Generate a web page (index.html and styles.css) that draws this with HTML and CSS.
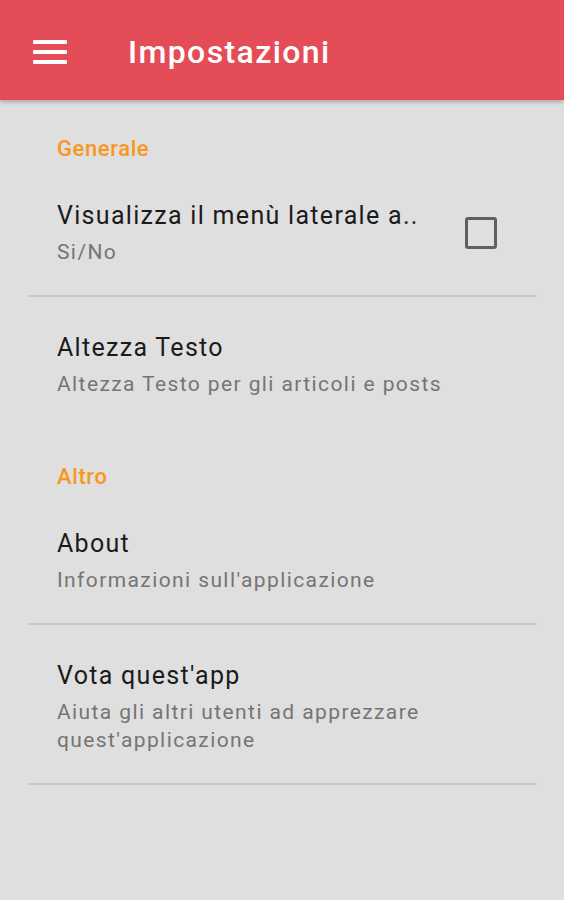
FILE: index.html
```html
<!DOCTYPE html>
<html lang="it">
<head>
    <meta charset="UTF-8">
    <meta name="viewport" content="width=device-width, initial-scale=1.0">
    <title>Impostazioni</title>
    <link rel="stylesheet" href="styles.css">
</head>
<body>
    <div class="toolbar">
        <span class="menu-icon">
            <span></span><span></span><span></span>
        </span>
        <h1>Impostazioni</h1>
    </div>

    <div class="prefs">
        <div class="category">Generale</div>
        <div class="pref divided">
            <div class="pref-text">
                <div class="pref-title">Visualizza il menù laterale a..</div>
                <div class="pref-summary">Si/No</div>
            </div>
            <span class="checkbox"></span>
        </div>
        <div class="pref">
            <div class="pref-text">
                <div class="pref-title">Altezza Testo</div>
                <div class="pref-summary">Altezza Testo per gli articoli e posts</div>
            </div>
        </div>

        <div class="category">Altro</div>
        <div class="pref divided">
            <div class="pref-text">
                <div class="pref-title">About</div>
                <div class="pref-summary">Informazioni sull'applicazione</div>
            </div>
        </div>
        <div class="pref divided">
            <div class="pref-text">
                <div class="pref-title">Vota quest'app</div>
                <div class="pref-summary">Aiuta gli altri utenti ad apprezzare<br>quest'applicazione</div>
            </div>
        </div>
    </div>
</body>
</html>
```

FILE: styles.css
```css
body {
    margin: 0;
    font-family: Roboto, "Noto Sans", sans-serif;
    background-color: #dfdfdf;
    height: 900px;
    overflow: hidden;
}
.toolbar {
    height: 100px;
    background-color: #e44d57;
    display: flex;
    align-items: center;
    padding-left: 33px;
    box-shadow: 0 2px 4px rgba(0, 0, 0, 0.25);
    position: relative;
}
.menu-icon {
    display: flex;
    flex-direction: column;
    gap: 6px;
    width: 34px;
    margin-top: 3px;
}
.menu-icon span {
    display: block;
    height: 4px;
    background-color: #fff;
    border-radius: 1px;
}
.toolbar h1 {
    margin: 4px 0 0 61px;
    color: #fff;
    font-size: 32px;
    font-weight: 500;
    line-height: 40px;
    letter-spacing: 1.4px;
}
.prefs {
    margin: 0 27px 0 28px;
}
.category {
    color: #f7981d;
    font-size: 22px;
    font-weight: 500;
    line-height: 28px;
    letter-spacing: 0.6px;
    padding: 35px 29px 3px;
}
.pref + .category {
    padding-top: 36px;
}
.pref {
    display: flex;
    align-items: center;
    padding: 35px 40px 29px 29px;
}
.category + .pref {
    padding-top: 34px;
}
.divided {
    border-bottom: 2px solid #c9c9c9;
}
.pref-text {
    flex: 1;
}
.pref-title {
    color: #1b1b1b;
    font-size: 25px;
    line-height: 32px;
    letter-spacing: 1.3px;
}
.pref-summary {
    color: #757575;
    font-size: 21px;
    line-height: 28px;
    letter-spacing: 1.4px;
    margin-top: 6px;
}
.checkbox {
    width: 26px;
    height: 26px;
    border: 3px solid #5f5f5f;
    border-radius: 3px;
}
```
